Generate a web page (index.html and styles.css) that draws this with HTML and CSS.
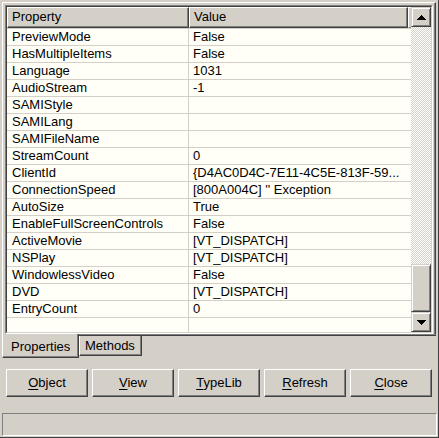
FILE: index.html
```html
<!DOCTYPE html>
<html>
<head>
<meta charset="utf-8">
<link rel="stylesheet" href="styles.css">
</head>
<body>
<div class="window">
  <div class="panel">
    <div class="grid">
      <div class="grid-inner">
        <div class="list">
          <div class="header">
            <div class="hcell hprop">Property</div>
            <div class="hcell hval">Value</div>
            <div class="hcell hfill"></div>
          </div>
          <div class="rows">
            <div class="row"><div class="c-prop">PreviewMode</div><div class="c-val">False</div></div>
            <div class="row"><div class="c-prop">HasMultipleItems</div><div class="c-val">False</div></div>
            <div class="row"><div class="c-prop">Language</div><div class="c-val">1031</div></div>
            <div class="row"><div class="c-prop">AudioStream</div><div class="c-val">-1</div></div>
            <div class="row"><div class="c-prop">SAMIStyle</div><div class="c-val"></div></div>
            <div class="row"><div class="c-prop">SAMILang</div><div class="c-val"></div></div>
            <div class="row"><div class="c-prop">SAMIFileName</div><div class="c-val"></div></div>
            <div class="row"><div class="c-prop">StreamCount</div><div class="c-val">0</div></div>
            <div class="row"><div class="c-prop">ClientId</div><div class="c-val">{D4AC0D4C-7E11-4C5E-813F-59...</div></div>
            <div class="row"><div class="c-prop">ConnectionSpeed</div><div class="c-val">[800A004C] '' Exception</div></div>
            <div class="row"><div class="c-prop">AutoSize</div><div class="c-val">True</div></div>
            <div class="row"><div class="c-prop">EnableFullScreenControls</div><div class="c-val">False</div></div>
            <div class="row"><div class="c-prop">ActiveMovie</div><div class="c-val">[VT_DISPATCH]</div></div>
            <div class="row"><div class="c-prop">NSPlay</div><div class="c-val">[VT_DISPATCH]</div></div>
            <div class="row"><div class="c-prop">WindowlessVideo</div><div class="c-val">False</div></div>
            <div class="row"><div class="c-prop">DVD</div><div class="c-val">[VT_DISPATCH]</div></div>
            <div class="row"><div class="c-prop">EntryCount</div><div class="c-val">0</div></div>
            <div class="row"><div class="c-prop"></div><div class="c-val"></div></div>
          </div>
        </div>
        <div class="vscroll">
          <div class="sbtn">
            <svg width="9" height="5" viewBox="0 0 9 5" shape-rendering="crispEdges"><path d="M4 0h1v1h1v1h1v1h1v1h1v1H0V4h1V3h1V2h1V1h1z" fill="#000"/></svg>
          </div>
          <div class="track"></div>
          <div class="thumb"></div>
          <div class="sbtn">
            <svg width="9" height="5" viewBox="0 0 9 5" shape-rendering="crispEdges"><path d="M0 0h9v1H8v1H7v1H6v1H5v1H4V4H3V3H2V2H1V1H0z" fill="#000"/></svg>
          </div>
        </div>
      </div>
    </div>
  </div>
  <div class="tabstrip">
    <div class="tab active">Properties</div>
    <div class="tabrest">
      <div class="tabrest-inner">
        <div class="tab">Methods</div>
      </div>
    </div>
  </div>
  <div class="buttons">
    <div class="btn"><u>O</u>bject</div>
    <div class="btn"><u>V</u>iew</div>
    <div class="btn"><u>T</u>ypeLib</div>
    <div class="btn"><u>R</u>efresh</div>
    <div class="btn"><u>C</u>lose</div>
  </div>
  <div class="status"></div>
</div>
</body>
</html>
```

FILE: styles.css
```css
* { box-sizing: border-box; }
html, body {
  margin: 0;
  padding: 0;
  background: #d4d0c8;
}
body {
  font-family: "Liberation Sans", Arial, sans-serif;
  font-size: 13px;
  color: #000;
}
.window {
  width: 439px;
  height: 438px;
  padding: 2px 1px 1px 2px;
  border-right: 1px solid #404040;
  border-bottom: 1px solid #404040;
  display: flex;
  flex-direction: column;
  overflow: hidden;
}
.panel {
  width: 434px;
  height: 332px;
  border-top: 1px solid #fff;
  border-left: 1px solid #fff;
  border-right: 1px solid #404040;
  box-shadow: inset -1px 0 0 #808080;
  padding: 2px 2px 0 2px;
}
.grid {
  width: 428px;
  height: 329px;
  border-top: 1px solid #808080;
  border-left: 1px solid #808080;
  border-right: 1px solid #fff;
  border-bottom: 1px solid #fff;
}
.grid-inner {
  width: 426px;
  height: 327px;
  border-top: 1px solid #404040;
  border-left: 1px solid #404040;
  border-right: 1px solid #d4d0c8;
  border-bottom: 1px solid #d4d0c8;
  display: flex;
  background: #fffff7;
}
.list {
  width: 404px;
  height: 325px;
  overflow: hidden;
}
.header {
  display: flex;
  height: 21px;
  background: #d4d0c8;
}
.hcell {
  height: 21px;
  line-height: 17px;
  border-top: 1px solid #fff;
  border-left: 1px solid #fff;
  border-right: 1px solid #404040;
  border-bottom: 1px solid #404040;
  box-shadow: inset -1px -1px 0 #808080;
  padding-left: 4px;
  white-space: nowrap;
}
.hprop { width: 182px; }
.hval { width: 219px; }
.hfill { width: 3px; padding: 0; border-right: 0; box-shadow: none; border-bottom-color: #808080; }
.row {
  display: flex;
  height: 17px;
  border-top: 1px solid #d4d0c8;
  line-height: 16px;
  white-space: nowrap;
}
.c-prop {
  width: 182px;
  padding-left: 5px;
  border-right: 1px solid #d4d0c8;
  overflow: hidden;
}
.c-val {
  width: 221px;
  padding-left: 4px;
  overflow: hidden;
}
.vscroll {
  width: 20px;
  height: 325px;
  display: flex;
  flex-direction: column;
}
.sbtn, .thumb {
  width: 20px;
  background: #d4d0c8;
  border-top: 1px solid #d4d0c8;
  border-left: 1px solid #d4d0c8;
  border-right: 1px solid #404040;
  border-bottom: 1px solid #404040;
  box-shadow: inset 1px 1px 0 #fff, inset -1px -1px 0 #808080;
}
.sbtn {
  height: 20px;
  display: flex;
  align-items: center;
  justify-content: center;
}
.sbtn svg { display: block; }
.track {
  height: 237px;
  background: repeating-conic-gradient(#d4d0c8 0 25%, #fff 0 50%) 0 0 / 2px 2px;
}
.thumb { height: 48px; }
.tabstrip {
  display: flex;
  height: 24px;
  width: 434px;
}
.tab {
  white-space: nowrap;
  border-left: 1px solid #fff;
  border-right: 1px solid #404040;
  border-bottom: 1px solid #404040;
  box-shadow: inset -1px -1px 0 #808080;
}
.tab.active {
  width: 77px;
  height: 24px;
  padding: 5px 0 0 8px;
  line-height: 16px;
}
.tabrest {
  flex: 1;
  border-top: 1px solid #808080;
}
.tabrest-inner {
  border-top: 1px solid #404040;
  display: flex;
}
.tabrest .tab {
  width: 63px;
  height: 20px;
  padding: 2px 0 0 5px;
  line-height: 16px;
}
.buttons {
  display: flex;
  gap: 4px;
  margin: 11px 0 0 4px;
}
.btn {
  width: 82px;
  height: 28px;
  border-top: 1px solid #fff;
  border-left: 1px solid #fff;
  border-right: 1px solid #404040;
  border-bottom: 1px solid #404040;
  box-shadow: inset -1px -1px 0 #808080;
  text-align: center;
  line-height: 25px;
}
.btn u { text-decoration-thickness: 1px; text-underline-offset: 2px; }
.status {
  margin-top: 16px;
  width: 435px;
  height: 23px;
  border-top: 1px solid #808080;
  border-left: 1px solid #808080;
  border-right: 1px solid #fff;
  border-bottom: 1px solid #fff;
}
```
